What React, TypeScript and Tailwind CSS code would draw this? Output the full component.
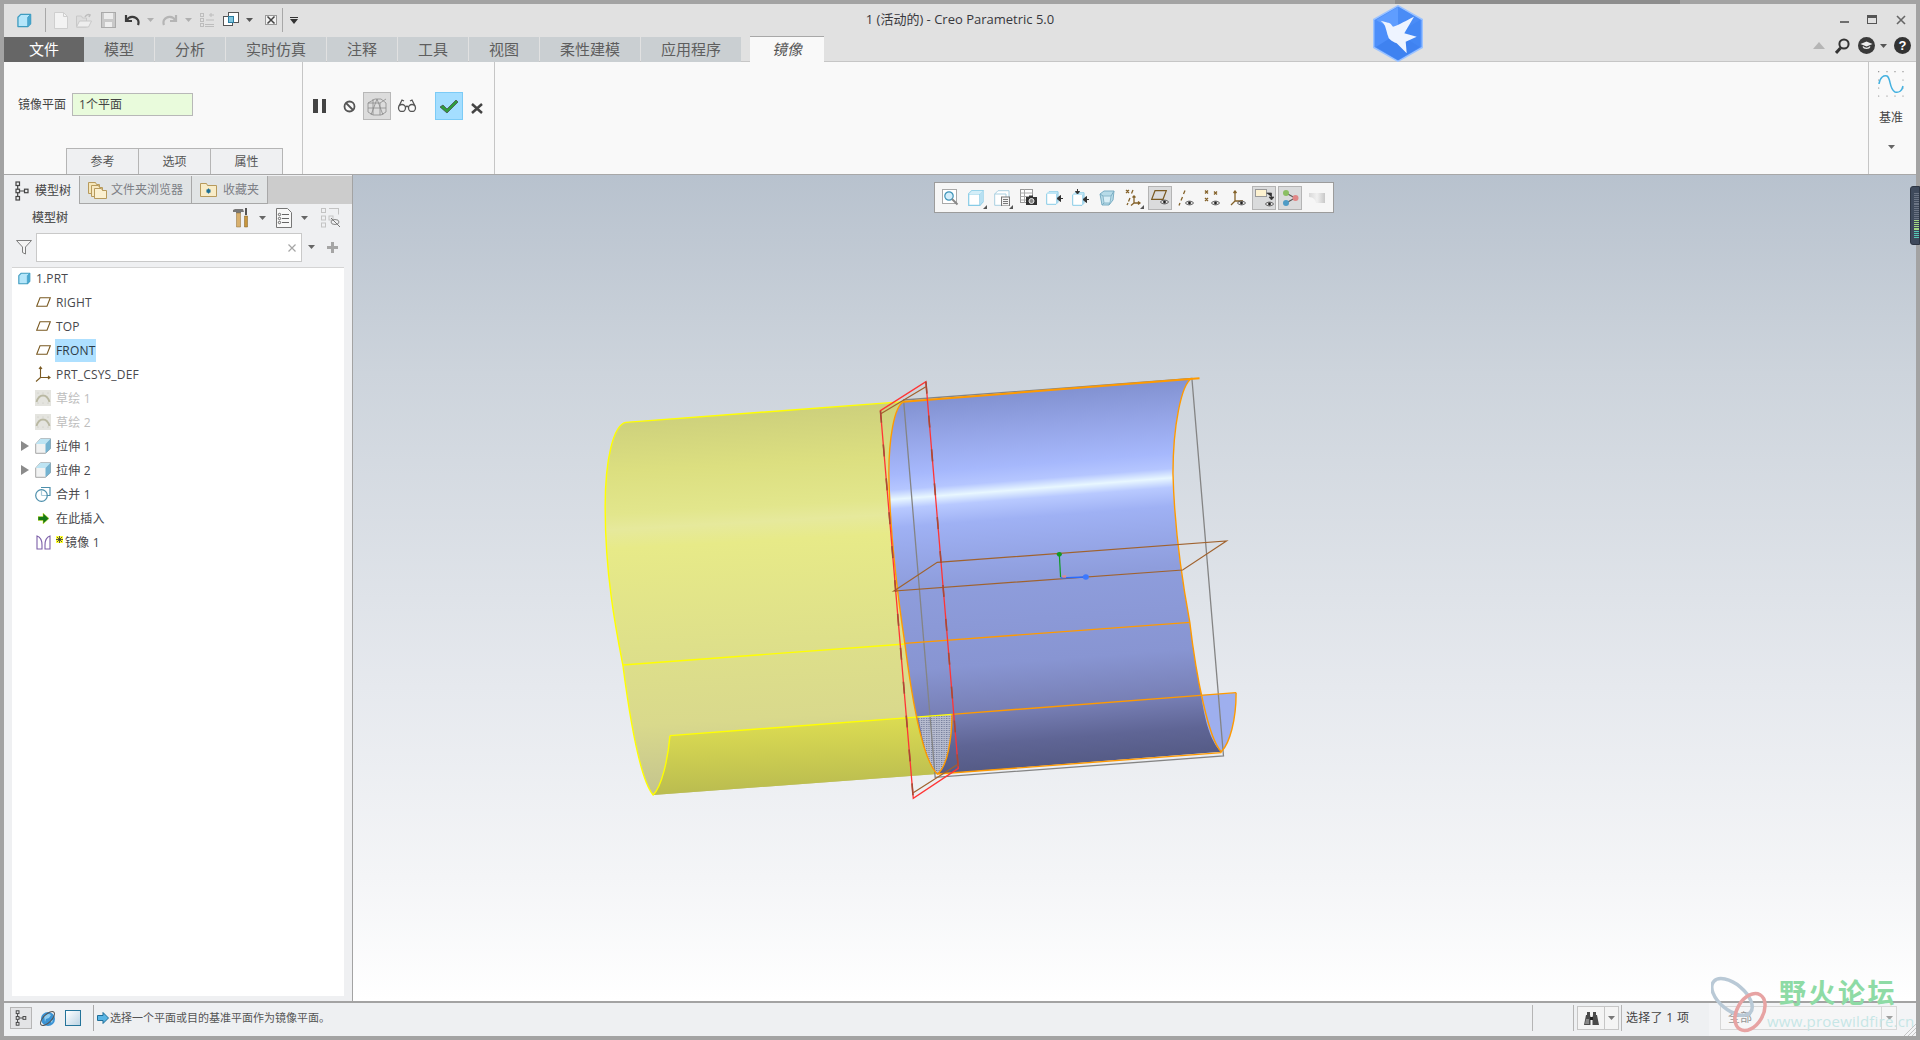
import React from "react";

const Caret = ({ c = "#666", w = 7, h = 4 }: { c?: string; w?: number; h?: number }) => (
  <svg width={w} height={h} viewBox="0 0 7 4" className="shrink-0"><path d="M0 0h7L3.5 4z" fill={c} /></svg>
);

const Cube = ({ s = 16 }: { s?: number }) => (
  <svg width={s} height={s} viewBox="0 0 16 16" className="shrink-0">
    <path d="M1 4.5 4 1.5h10.5v10L11.5 14.5H1z" fill="#b5e6fa" stroke="#3f9cc0" strokeWidth="1.4" strokeLinejoin="round" />
    <path d="M11.5 14.5V4.5L14.5 1.5" fill="none" stroke="#3f9cc0" />
    <path d="M11.5 4.5v10l3-3v-10z" fill="#4aa7cf" />
  </svg>
);

const TreeIcon = ({ s = 14, h = 20 }: { s?: number; h?: number }) => (
  <svg width={s} height={h} viewBox="0 0 14 20" className="shrink-0" fill="none" stroke="#444" strokeWidth="1.2">
    <rect x="1" y="1" width="3.5" height="3.5" /><rect x="1" y="8.2" width="3.5" height="3.5" /><rect x="1" y="15.5" width="3.5" height="3.5" />
    <rect x="9.5" y="8.2" width="3.5" height="3.5" /><path d="M2.7 4.5v3.7M2.7 11.7v3.8M4.5 10h5" />
  </svg>
);

const PlaneIcon = ({ c = "#7a5a22" }: { c?: string }) => (
  <svg width="15" height="10" viewBox="0 0 15 10" className="shrink-0"><path d="M4 .7h10.3L11 9.3H.7z" fill="none" stroke={c} strokeWidth="1.1" /></svg>
);

const Eye = () => (
  <svg width="9" height="6" viewBox="0 0 11 7" className="absolute bottom-0 right-0">
    <path d="M.5 3.5C3 .5 8 .5 10.5 3.5 8 6.5 3 6.5.5 3.5z" fill="#e5e5e5" stroke="#333" /><circle cx="5.5" cy="3.5" r="1.7" fill="#222" />
  </svg>
);

const SketchIcon = () => (
  <svg width="16" height="16" viewBox="0 0 16 16" className="shrink-0">
    <rect width="16" height="16" fill="#e4e4df" />
    <g fill="#bcbcb4"><circle cx="3" cy="3" r=".5" /><circle cx="8" cy="3" r=".5" /><circle cx="13" cy="3" r=".5" /><circle cx="3" cy="13" r=".5" /><circle cx="8" cy="13" r=".5" /><circle cx="13" cy="13" r=".5" /></g>
    <path d="M1.5 12C3 7 6 5.5 8 5.5s5 1.5 6.500 6.500" fill="none" stroke="#b9b8a2" strokeWidth="1.800" />
  </svg>
);

const ExtrudeIcon = () => (
  <svg width="16" height="16" viewBox="0 0 16 16" className="shrink-0">
    <path d="M.7 6 5.500.7h10v10L10.500 15.300H.7z" fill="#f1f2f2" stroke="#a5a5a5" />
    <path d="M.7 6 5.500.7h10L10.500 6z" fill="#bde4f3" />
    <path d="M10.500 6 15.500.7v10l-5 4.600z" fill="#74b3d1" />
  </svg>
);

const TreeRow = ({ icon, label, arrow, hi, dim, indent = true, star }: { icon: React.ReactNode; label: string; arrow?: boolean; hi?: boolean; dim?: boolean; indent?: boolean; star?: boolean }) => (
  <div className={`h-[24px] flex items-center ${indent ? "pl-[9px]" : "pl-[4px]"}`}>
    {indent && (
      <div className="w-[8px] mr-[6px] flex justify-center">
        {arrow && <svg width="8" height="10" viewBox="0 0 8 10"><path d="M0 0l8 5-8 5z" fill="#8b8b8b" /></svg>}
      </div>
    )}
    <div className="w-[16px] flex justify-center">{icon}</div>
    <div className={`${indent ? "ml-[5px]" : "ml-[4px]"} flex items-center`}>
      {star && (
        <svg width="7" height="7" viewBox="0 0 7 7" className="mr-[2px] -mt-[5px] shrink-0">
          <rect width="7" height="7" fill="#ffff33" /><path d="M3.500 0v7M0 3.500h7M1 1l5 5M6 1 1 6" stroke="#333" strokeWidth=".8" />
        </svg>
      )}
      <span className={`text-[12px] leading-[23px] h-[23px] tracking-[0.18px] ${hi ? "bg-[#aee0ff] px-[1px] -mx-[1px] text-[#2d3b46]" : dim ? "text-[#bdbdbd]" : "text-[#48484c]"}`}>{label}</span>
    </div>
  </div>
);

const TB = ({ active, children, mark }: { active?: boolean; children: React.ReactNode; mark?: boolean }) => (
  <div className={`relative w-[24px] h-[24px] shrink-0 flex items-center justify-center ${active ? "bg-[#dadbdc] border border-[#b4b4b4]" : ""}`}>
    {children}
    {mark && <svg width="4" height="4" viewBox="0 0 4 4" className="absolute right-[1px] bottom-[1px]"><path d="M4 0v4H0z" fill="#555" /></svg>}
  </div>
);

const BlueBox = () => (
  <svg width="16" height="16" viewBox="0 0 16 16">
    <path d="M.7 4 4 .7h11v11L11.800 15.300H.7z" fill="#fff" stroke="#86cbe6" strokeWidth="1.200" /><path d="M.7 4H11.800V15.300M11.800 4 15 .7" fill="none" stroke="#86cbe6" /><path d="M.7 4 4 .7h11L11.800 4z" fill="#d4eef8" /><path d="M11.800 4 15 .7v11l-3.200 3.600z" fill="#b7e0f2" />
  </svg>
);

const ViewToolbar = () => (
  <div className="absolute left-[581px] top-[7px] h-[31px] w-[400px] bg-[#f6f6f6] border border-[#9c9c9c] flex items-center pl-[3px] gap-[2.2px]">
    <TB>
      <svg width="17" height="17" viewBox="0 0 17 17"><rect x=".5" y=".5" width="14" height="14" fill="#fff" stroke="#a9a9a9" /><circle cx="7" cy="7" r="4.200" fill="#d4eefb" stroke="#3d93b8" strokeWidth="1.200" /><path d="M10 10l5.500 5.500" stroke="#888" strokeWidth="2" /></svg>
    </TB>
    <TB mark><BlueBox /></TB>
    <TB mark>
      <svg width="16" height="16" viewBox="0 0 16 16"><path d="M.7 4 4 .7h11v14.600H.7z" fill="#fff" stroke="#a9cfe0" /><path d="M.7 4H12V15" fill="none" stroke="#a9cfe0" /><rect x="7.500" y="7" width="8" height="9" fill="#f4f4f4" stroke="#777" /><path d="M9 9.500h5M9 11.500h5M9 13.500h5" stroke="#777" /></svg>
    </TB>
    <TB>
      <svg width="17" height="17" viewBox="0 0 17 17"><rect x=".5" y=".5" width="12" height="13" fill="#fff" stroke="#999" /><path d="M.5 4h12M.5 7.500h12M.5 11h12M4.500.5v13" stroke="#aaa" /><rect x="6" y="8" width="11" height="8" fill="#333" /><circle cx="11.500" cy="12" r="2.500" fill="#888" stroke="#eee" /><rect x="9" y="6.500" width="4" height="2" fill="#333" /></svg>
    </TB>
    <TB>
      <svg width="17" height="14" viewBox="0 0 17 14"><path d="M.7 3 3 .7h9v10.500L10 13.300H.7z" fill="#fff" stroke="#86cbe6" /><path d="M.7 3 3 .7h9L10 3z" fill="#bfe6f6" /><path d="M10 3 12 .7v10.500l-2 2.100z" fill="#a8d8ee" /><path d="M17 7.500h-3.500M11 7.500l3.500-3v6z" fill="#333" stroke="#333" /></svg>
    </TB>
    <TB>
      <svg width="17" height="17" viewBox="0 0 17 17"><path d="M.7 6 3 3.700h9v10.500L10 16.300H.7z" fill="#fff" stroke="#86cbe6" /><path d="M.7 6 3 3.700h9L10 6z" fill="#bfe6f6" /><path d="M10 6 12 3.700v10.500l-2 2.100z" fill="#a8d8ee" /><path d="M17 10.500h-3.500M11 10.500l3.500-3v6zM5.500 0v3M3.500 2.500h4L5.500 5z" fill="#333" stroke="#333" /></svg>
    </TB>
    <TB>
      <svg width="16" height="16" viewBox="0 0 16 16"><path d="M1 4 5 1h10l-1 9-4 5H3z" fill="#b7dbe8" stroke="#7aaec4" /><path d="M4 6h8l-1 7H5z" fill="#d8eef6" stroke="#8ab8cb" /><path d="M1 4l3 2M15 1l-3 5M10 15l1-2M3 15l2-2" stroke="#7aaec4" /></svg>
    </TB>
    <TB mark>
      <svg width="17" height="17" viewBox="0 0 17 17" stroke="#84622a" strokeWidth="1.300" fill="none"><path d="M1 1l3 3M4 1 1 4M8 1 6.500 4.500M5 9 3.500 12.500M2 16l1-2M9 7v7h6M9 14l-3 2.500M13 12.500l2 1.500-2 1.500M7.500 8.500 9 7l1.500 1.500" /></svg>
    </TB>
    <TB active>
      <div className="relative w-[18px] h-[15px]">
        <svg width="16" height="10" viewBox="0 0 16 10" className="absolute left-0 top-0"><path d="M4 .7h11.300L12 9.300H.7z" fill="none" stroke="#7a5a22" strokeWidth="1.200" /></svg>
        <Eye />
      </div>
    </TB>
    <TB>
      <div className="relative w-[16px] h-[16px]">
        <svg width="8" height="16" viewBox="0 0 8 16" stroke="#84622a" strokeWidth="1.300" fill="none" className="absolute left-0 top-0"><path d="M7 .5 5.500 4M4.500 7 3 10.500M2 13 1 15.500" /></svg>
        <Eye />
      </div>
    </TB>
    <TB>
      <div className="relative w-[16px] h-[16px]">
        <svg width="16" height="14" viewBox="0 0 16 14" stroke="#84622a" strokeWidth="1.300" fill="none" className="absolute left-0 top-0"><path d="M1 .5l3 3M4 .5l-3 3M10 1.500l3 3M13 1.500l-3 3M1 8l3 3M4 8l-3 3" /></svg>
        <Eye />
      </div>
    </TB>
    <TB>
      <div className="relative w-[16px] h-[16px]">
        <svg width="14" height="16" viewBox="0 0 14 16" stroke="#84622a" strokeWidth="1.300" fill="none" className="absolute left-0 top-0"><path d="M5 1v10h8M5 11l-4 4M3.500 3 5 1l1.500 2" /></svg>
        <Eye />
      </div>
    </TB>
    <TB active>
      <div className="relative w-[19px] h-[18px]">
        <svg width="19" height="12" viewBox="0 0 19 12" className="absolute left-0 top-0"><rect x=".5" y=".5" width="11" height="7" fill="#fdf2d0" stroke="#999" /><path d="M11.500 4h5v4M14 8h5l-2.500 3z" fill="#333" stroke="#333" strokeWidth=".7" /></svg>
        <Eye />
      </div>
    </TB>
    <TB active>
      <svg width="17" height="18" viewBox="0 0 17 18"><path d="M4 4l9 5M4 14l9-5" stroke="#555" strokeWidth="1.200" /><circle cx="4" cy="4" r="3" fill="#8bbf63" /><circle cx="4" cy="14" r="3" fill="#4f9cc6" /><circle cx="13.500" cy="9" r="3" fill="#e08686" /></svg>
    </TB>
    <TB>
      <svg width="16" height="12" viewBox="0 0 16 12"><defs><linearGradient id="btg" x1="0" x2="1" y1="0" y2="0"><stop offset="0" stopColor="#d8d8d8" /><stop offset=".5" stopColor="#f0f0f0" /><stop offset="1" stopColor="#c8c8c8" /></linearGradient></defs><path d="M0 1h16v10H7c0-3-3-6-7-6z" fill="url(#btg)" /></svg>
    </TB>
  </div>
);

const Scene = () => {
  const ns = { vectorEffect: "non-scaling-stroke" as const, fill: "none" };
  return (
    <svg className="absolute left-[237px] top-[185px]" width="660" height="450" viewBox="0 0 1568 1350" preserveAspectRatio="none">
      <defs>
        <linearGradient id="yel" gradientUnits="userSpaceOnUse" x1="400" y1="150" x2="480" y2="1300">
          <stop offset="0" stopColor="#cdd07c" />
          <stop offset=".14" stopColor="#dcdf80" />
          <stop offset=".25" stopColor="#e2e68c" />
          <stop offset=".29" stopColor="#e6e99c" />
          <stop offset=".34" stopColor="#e7ea88" />
          <stop offset=".6" stopColor="#dee08a" />
          <stop offset=".8" stopColor="#d9d98c" />
          <stop offset="1" stopColor="#c2c28e" />
        </linearGradient>
        <linearGradient id="yel2" gradientUnits="userSpaceOnUse" x1="500" y1="1080" x2="510" y2="1290">
          <stop offset="0" stopColor="#dcdc52" />
          <stop offset="1" stopColor="#babc50" />
        </linearGradient>
        <linearGradient id="blu" gradientUnits="userSpaceOnUse" x1="1050" y1="85" x2="1160" y2="1210">
          <stop offset="0" stopColor="#8090cf" />
          <stop offset=".1" stopColor="#94a4e6" />
          <stop offset=".2" stopColor="#a6b8fc" />
          <stop offset=".24" stopColor="#b5c6ff" />
          <stop offset=".265" stopColor="#e8f7ff" />
          <stop offset=".29" stopColor="#b8c9ff" />
          <stop offset=".34" stopColor="#9fb1f4" />
          <stop offset=".5" stopColor="#8e9ddc" />
          <stop offset=".72" stopColor="#8895d2" />
          <stop offset=".84" stopColor="#7880b6" />
          <stop offset=".93" stopColor="#5f6595" />
          <stop offset="1" stopColor="#555b86" />
        </linearGradient>
        <pattern id="dots" width="6" height="6" patternUnits="userSpaceOnUse">
          <rect width="6" height="6" fill="#b7bccf" /><rect width="3" height="3" fill="#777f9c" />
        </pattern>
      </defs>
      <path d="M85 187L745 125C722 140 710 240 710 340C712 500 730 700 748 850C765 1020 790 1200 825 1242L150 1305C120 1260 95 1080 78 915C60 800 36 640 36 440C36 300 55 195 85 187Z" fill="url(#yel)" />
      <path d="M190 1127L860 1063L825 1242L150 1305C170 1280 185 1200 190 1127Z" fill="url(#yel2)" />
      <path d="M745 125L1430 55C1405 70 1385 200 1385 340C1388 500 1405 650 1425 787C1440 950 1470 1140 1500 1175L825 1242C790 1200 765 1020 748 850C730 700 712 500 710 340C710 240 722 140 745 125Z" fill="url(#blu)" />
      <path d="M1452 1005L1535 998C1535 1080 1520 1150 1500 1175C1475 1150 1460 1080 1452 1005Z" fill="#9eafee" />
      <path d="M780 1070L860 1063C860 1130 850 1220 825 1242C800 1220 790 1130 780 1070Z" fill="url(#dots)" />

      <path d="M745 120L1430 55L1505 1188L820 1252Z" stroke="#848484" strokeWidth="1.300" {...ns} />

      <g stroke="#ffff00" strokeWidth="1.400">
        <path d="M85 187L745 125" {...ns} />
        <path d="M78 915L748 852" {...ns} />
        <path d="M190 1127L860 1063" {...ns} />
        <path d="M85 187C55 195 36 300 36 440C36 640 60 800 78 915C95 1080 120 1260 150 1305C170 1280 185 1200 190 1127" {...ns} />
      </g>
      <g stroke="#ff9a00" strokeWidth="1.400">
        <path d="M745 125L1448 55" strokeWidth="2" {...ns} />
        <path d="M748 850L1425 787" {...ns} />
        <path d="M860 1063L1535 998" {...ns} />
        <path d="M825 1242L1500 1178" {...ns} />
        <path d="M745 125C722 140 710 240 710 340C712 500 730 700 748 850C765 1020 790 1200 825 1242C850 1220 860 1130 860 1063" {...ns} />
        <path d="M1430 55C1405 70 1385 200 1385 340C1388 500 1405 650 1425 787C1440 950 1470 1140 1500 1175C1520 1150 1535 1080 1535 998" {...ns} />
      </g>
      <g stroke="#a0622e" strokeWidth="1.200">
        <path d="M722 693L825 607L1512 543L1408 630Z" {...ns} />
        <path d="M690 162L798 80M768 1298L875 1212" {...ns} />
      </g>
      <path d="M1118 652L1115 583" stroke="#0f9a20" strokeWidth="1.200" {...ns} />
      <ellipse cx="1115" cy="583" rx="6" ry="7" fill="#0f9a20" />
      <path d="M1118 654L1178 651" stroke="#2a6bff" strokeWidth="1.400" {...ns} />
      <ellipse cx="1178" cy="651" rx="7" ry="8" fill="#3b78ff" />
      <rect x="1122" y="646" width="9" height="7" fill="#e08a8a" />
      <path d="M690 152L798 65L875 1225L768 1315Z" stroke="#ff3535" strokeWidth="1.300" {...ns} />
      <path d="M690 152L768 1315M798 65L875 1225" stroke="#a84a35" strokeWidth="1.600" strokeDasharray="12 22" {...ns} />
    </svg>
  );
};

const Tab = ({ label, w, first }: { label: string; w: number; first?: boolean }) => (
  <div style={{ width: w }} className={`h-[25px] mt-[1px] flex items-center justify-center text-[15px] ${first ? "bg-[#666666] text-white" : "bg-[#cacfd2] text-[#5e5e5e] mr-[1px]"}`}>{label}</div>
);

export default function App() {
  return (
    <div className="relative w-[1920px] h-[1040px] overflow-hidden bg-[#a3a3a3] px-[4px] pt-[4px] pb-[4px] flex flex-col font-['Open_Sans','Noto_Sans_CJK_SC',sans-serif] text-[12px] text-[#444]">
      {/* title bar */}
      <div className="h-[32px] shrink-0 bg-[#e1e1e1] grid grid-cols-[1fr_auto_1fr] items-center">
        <div className="flex items-center pl-[13px]">
          <Cube s={15} />
          <div className="w-px h-[24px] bg-[#a8a8a8] ml-[13px]" />
          <svg width="14" height="17" viewBox="0 0 14 17" className="ml-[8px]"><path d="M.5.5h9l4 4v12H.5z" fill="#f3f3f3" stroke="#cfcfcf" /><path d="M9.500.5v4h4" fill="none" stroke="#cfcfcf" /></svg>
          <svg width="16" height="15" viewBox="0 0 16 15" className="ml-[8px]"><path d="M.5 14V3h5l1 2h4v9z" fill="#ddd" stroke="#c8c8c8" /><path d="M.5 14l3-6h12l-3 6z" fill="#eee" stroke="#c8c8c8" /><path d="M9 4c1-2 3-3 5-2l-1 2" fill="none" stroke="#bdbdbd" strokeWidth="1.500" /></svg>
          <svg width="15" height="16" viewBox="0 0 15 16" className="ml-[9px]"><rect x=".5" y=".5" width="14" height="15" fill="#c9c9c9" stroke="#aaa" /><rect x="3" y="1" width="9" height="6" fill="#ececec" /><rect x="4" y="10" width="7" height="5" fill="#eee" /></svg>
          <svg width="16" height="13" viewBox="0 0 16 13" className="ml-[8px]"><path d="M2 1v6h6M2.500 6.500C5 2 11 1.500 14 6c.7 1.500.8 3 0 5" fill="none" stroke="#3c3c3c" strokeWidth="2.200" /></svg>
          <div className="ml-[7px]"><Caret c="#b0b0b0" /></div>
          <svg width="16" height="13" viewBox="0 0 16 13" className="ml-[8px]"><path d="M14 1v6H8M13.500 6.500C11 2 5 1.500 2 6c-.7 1.500-.8 3 0 5" fill="none" stroke="#b5b5b5" strokeWidth="2.200" /></svg>
          <div className="ml-[7px]"><Caret c="#b0b0b0" /></div>
          <svg width="15" height="16" viewBox="0 0 15 16" className="ml-[8px]" stroke="#bdbdbd" fill="none"><rect x=".5" y="1.500" width="3" height="3" /><rect x=".5" y="6.500" width="3" height="3" /><rect x=".5" y="11.500" width="3" height="3" /><path d="M5 12.500h9M5 14.500h9M6 8h8M9 3h5M11 1v4" /></svg>
          <svg width="16" height="16" viewBox="0 0 16 16" className="ml-[8px]"><rect x=".5" y="4.500" width="9" height="9" fill="#fff" stroke="#555" /><rect x="5.500" y=".5" width="10" height="10" fill="#fff" stroke="#555" /><rect x="5.500" y="4.500" width="5" height="6" fill="#7fc5de" stroke="#2b7c9f" /></svg>
          <div className="ml-[7px]"><Caret c="#555" /></div>
          <svg width="12" height="10" viewBox="0 0 12 10" className="ml-[12px]"><rect x=".5" y=".5" width="11" height="9" fill="#f2f2f2" stroke="#999" /><path d="M2.500 1.500l7 7M9.500 1.500l-7 7" stroke="#444" strokeWidth="1.500" /></svg>
          <div className="w-px h-[24px] bg-[#a8a8a8] ml-[5px]" />
          <svg width="8" height="7" viewBox="0 0 8 7" className="ml-[7px]"><path d="M0 0h8v1H0zM0 2h8L4 7z" fill="#333" /></svg>
        </div>
        <div className="text-[13px] text-[#38383d]">1 (活动的) - Creo Parametric 5.0</div>
        <div className="flex items-center justify-end pr-[10px] gap-[18px] -mt-[1px]">
          <div className="w-[9px] h-[2px] bg-[#6e6e6e] mt-[4px]" />
          <div className="w-[10px] h-[9px] border border-[#555] border-t-[3px]" />
          <svg width="10" height="10" viewBox="0 0 10 10" className="ml-[1px]"><path d="M1 1l8 8M9 1 1 9" stroke="#666" strokeWidth="1.600" /></svg>
        </div>
      </div>
      {/* tabs row */}
      <div className="h-[26px] shrink-0 bg-[#e1e1e1] flex items-stretch relative border-b border-[#c6c6c6]">
        <Tab label="文件" w={80} first />
        <Tab label="模型" w={70} />
        <Tab label="分析" w={70} />
        <Tab label="实时仿真" w={100} />
        <Tab label="注释" w={70} />
        <Tab label="工具" w={70} />
        <Tab label="视图" w={70} />
        <Tab label="柔性建模" w={100} />
        <Tab label="应用程序" w={100} />
        <div className="ml-[8px] w-[74px] h-[26px] bg-[#f9f9f9] border-t border-[#a8a8a8] flex items-center justify-center text-[15px] italic text-[#555] relative z-10">镜像</div>
        <div className="ml-auto flex items-center pr-[5px] pb-[6px]">
          <svg width="12" height="7" viewBox="0 0 12 7"><path d="M0 7 6 0l6 7z" fill="#b5b5b5" /></svg>
          <svg width="15" height="16" viewBox="0 0 15 16" className="ml-[10px]"><circle cx="9" cy="6" r="4.600" fill="none" stroke="#333" strokeWidth="2" /><path d="M5.500 10 1 15" stroke="#333" strokeWidth="3" /></svg>
          <svg width="17" height="17" viewBox="0 0 17 17" className="ml-[8px]"><circle cx="8.500" cy="8.500" r="8.500" fill="#3a3a3a" /><path d="M2.500 7 8.500 4.500l6 2.500-6 2.500z" fill="#eee" /><path d="M5 9.500c1 2.500 6 2.500 7 0" fill="none" stroke="#eee" strokeWidth="1.300" /></svg>
          <div className="ml-[5px]"><Caret c="#555" /></div>
          <div className="ml-[7px] w-[17px] h-[17px] rounded-full bg-[#333] text-white flex items-center justify-center text-[13px] font-bold font-['Liberation_Sans',sans-serif]">?</div>
        </div>
      </div>
      {/* ribbon */}
      <div className="h-[112px] shrink-0 bg-[#f9f9f9] flex">
        <div className="w-[299px] h-full border-r border-[#c6c6c6] relative flex flex-col">
          <div className="flex items-center pl-[14px] pt-[31px]">
            <span className="text-[12px] text-[#444]">镜像平面</span>
            <div className="ml-[6px] w-[121px] h-[23px] bg-[#e9fbdc] border border-[#b8b8b8] flex items-center pl-[6px] text-[12px] text-[#444]">1个平面</div>
          </div>
          <div className="mt-auto ml-[62px] flex">
            {["参考", "选项", "属性"].map((t) => (
              <div key={t} className="w-[73px] h-[26px] -mr-px bg-[#eff0f2] border border-b-0 border-[#b5b5b5] flex items-center justify-center text-[12px] text-[#555]">{t}</div>
            ))}
          </div>
        </div>
        <div className="w-[192px] h-full border-r border-[#c6c6c6] flex items-start pt-[30px]">
          <div className="ml-[10px] mt-[7px] flex gap-[4px]"><div className="w-[4.500px] h-[14px] bg-[#444]" /><div className="w-[4.500px] h-[14px] bg-[#444]" /></div>
          <svg width="13" height="13" viewBox="0 0 13 13" className="ml-[17px] mt-[8px]"><circle cx="6.500" cy="6.500" r="5" fill="none" stroke="#555" strokeWidth="1.800" /><path d="M3 3l7 7" stroke="#555" strokeWidth="1.800" /></svg>
          <div className="ml-[7px] w-[28px] h-[28px] bg-[#dcdcdc] border border-[#b8b8b8] flex items-center justify-center">
            <svg width="20" height="19" viewBox="0 0 20 19" fill="none" stroke="#8a8a8a" strokeWidth=".8"><path d="M1 6l7-4h6l5 4v9l-5 3H6l-5-3zM1 6h12l6-4M13 6v12M6 2v16M10 2 4 18M10 2l6 16M1 11h18" /></svg>
          </div>
          <svg width="20" height="13" viewBox="0 0 20 13" className="ml-[6px] mt-[7px]" fill="none" stroke="#555" strokeWidth="1.300"><circle cx="5" cy="9" r="3.500" /><circle cx="15" cy="9" r="3.500" /><path d="M8.500 8c1-1 2-1 3 0M2 7l3-6 2 1M18 7l-3-6-2 1" /></svg>
          <div className="ml-[18px] w-[28px] h-[28px] bg-[#a4deff] border border-[#7ccbf6] flex items-center justify-center">
            <svg width="20" height="15" viewBox="0 0 20 15"><path d="M1 8l3-2 4 4L17 1l2 2L8 14z" fill="#2f9d3c" stroke="#454545" strokeWidth=".7" /></svg>
          </div>
          <svg width="12" height="11" viewBox="0 0 12 11" className="ml-[8px] mt-[11px]"><path d="M1 1l10 9M11 1 1 10" stroke="#444" strokeWidth="2.500" /></svg>
        </div>
        <div className="flex-1" />
        <div className="w-[48px] h-full border-l border-[#c6c6c6] flex flex-col items-center pt-[9px] pr-[3px]">
          <svg width="26" height="26" viewBox="0 0 26 26">
            <g fill="#777"><circle cx=".7" cy=".7" r=".6" /><circle cx="9" cy=".7" r=".6" /><circle cx="17" cy=".7" r=".6" /><circle cx="25" cy=".7" r=".6" /><circle cx=".7" cy="9" r=".6" /><circle cx="25" cy="9" r=".6" /><circle cx=".7" cy="17" r=".6" /><circle cx="25" cy="17" r=".6" /><circle cx=".7" cy="25" r=".6" /><circle cx="9" cy="25" r=".6" /><circle cx="17" cy="25" r=".6" /><circle cx="25" cy="25" r=".6" /></g>
            <path d="M1 13C2 6 6 4 9 5c4 2 2 13 8 16 4 1 7-1 8-6" fill="none" stroke="#43b1e0" strokeWidth="1.500" />
          </svg>
          <span className="mt-[13px] text-[12px] text-[#444] leading-[16px]">基准</span>
          <div className="mt-[19px]"><Caret c="#666" /></div>
        </div>
      </div>
      {/* main */}
      <div className="flex-1 min-h-0 flex border-t border-[#a8a8a8]">
        <div className="w-[349px] shrink-0 h-full bg-[#eff0f2] border-r-[1px] border-[#a3a3a3] pt-[1px] flex flex-col">
          <div className="h-[28px] shrink-0 bg-[#cccccc] flex items-stretch">
            <div className="w-[76px] border-r border-[#a8a8a8] bg-[#eff0f2] flex items-center pl-[11px] pt-[1px]">
              <TreeIcon />
              <span className="ml-[6px] text-[12px] text-[#444]">模型树</span>
            </div>
            <div className="w-[112px] border-r border-b border-[#a8a8a8] bg-[#e1e4e5] flex items-center pl-[8px]">
              <svg width="19" height="19" viewBox="0 0 19 19"><path d="M.5 2.500h7l1 2h3v9H.5z" fill="#f5e6b8" stroke="#b79a5c" /><path d="M3.500 5.500h7l1 2h3v9h-11z" fill="#f7e8c0" stroke="#b79a5c" /><path d="M6.500 8.500h7l1 2h4v8h-12z" fill="#fbf0d0" stroke="#b79a5c" /></svg>
              <span className="ml-[4px] text-[12px] text-[#7d7f85]">文件夹浏览器</span>
            </div>
            <div className="w-[76px] border-r border-b border-[#a8a8a8] bg-[#e1e4e5] flex items-center pl-[8px]">
              <svg width="17" height="15" viewBox="0 0 17 15"><path d="M.5 1.500h6l1 2h9v11H.5z" fill="#f8ecc8" stroke="#b79a5c" /><path d="M6 9h5M8.500 6.500v5M6.800 7.300l3.400 3.400M10.200 7.300l-3.400 3.400" stroke="#1b6e93" strokeWidth="1.100" /></svg>
              <span className="ml-[6px] text-[12px] text-[#7d7f85]">收藏夹</span>
            </div>
          </div>
          <div className="h-[28px] shrink-0 flex items-center">
            <span className="ml-[28px] text-[12px] font-medium text-[#555]">模型树</span>
            <svg width="16" height="20" viewBox="0 0 16 20" className="ml-[165px]"><path d="M0 2l2-1h8l1 3H8v1H3V4L0 4z" fill="#777" /><path d="M3.500 5h4v14h-4z" fill="#d8b06e" stroke="#8c6c36" strokeWidth=".5" /><path d="M13 0v7" stroke="#555" strokeWidth="2" /><path d="M11.500 8h3v11h-3z" fill="#c8963e" stroke="#7c5c24" strokeWidth=".5" /></svg>
            <div className="ml-[10px]"><Caret c="#666" /></div>
            <svg width="16" height="20" viewBox="0 0 16 20" className="ml-[10px]"><path d="M.5.5h11l4 4v15H.5z" fill="#f8f8f8" stroke="#777" /><path d="M6 6.500h7M6 10.500h7M6 14.500h7" stroke="#666" /><circle cx="3.500" cy="6.500" r="1.200" fill="none" stroke="#666" /><circle cx="3.500" cy="10.500" r="1.200" fill="none" stroke="#666" /><circle cx="3.500" cy="14.500" r="1.200" fill="none" stroke="#666" /></svg>
            <div className="ml-[9px]"><Caret c="#666" /></div>
            <svg width="20" height="20" viewBox="0 0 20 20" className="ml-[13px]" fill="none" stroke="#c3c3c3"><rect x=".5" y=".5" width="4" height="4" /><rect x=".5" y="8" width="4" height="4" /><rect x=".5" y="15" width="4" height="4" /><rect x="8" y="8" width="4" height="4" /><path d="M8 .5h10M17.500 .5v6" /><ellipse cx="14" cy="14" rx="4" ry="2.500" stroke="#888" /><path d="M10 10l9 9" stroke="#777" /></svg>
          </div>
          <div className="h-[30px] shrink-0 flex items-end">
            <svg width="16" height="15" viewBox="0 0 16 15" className="ml-[12px] mb-[7px]"><path d="M.5.5h15L9.500 7v7l-3-1.500V7z" fill="#f4f4f4" stroke="#7e7e7e" /></svg>
            <div className="ml-[4px] w-[266px] h-[29px] bg-white border border-[#c9c9c9] flex items-center justify-end pr-[5px]">
              <svg width="8" height="8" viewBox="0 0 8 8"><path d="M.5.500l7 7M7.500.5l-7 7" stroke="#a5a5a5" strokeWidth="1.200" /></svg>
            </div>
            <div className="ml-[6px] mb-[13px]"><Caret c="#666" /></div>
            <svg width="11" height="11" viewBox="0 0 11 11" className="ml-[12px] mb-[9px]"><path d="M4 0h3v4h4v3H7v4H4V7H0V4h4z" fill="#a5a5a5" /></svg>
          </div>
          <div className="flex-1 min-h-0 mt-[5px] mb-[5px] mx-[8px] bg-white border-t border-[#d4d4d4]">
            <div className="-mt-[2px]">
              <TreeRow indent={false} icon={<Cube s={13} />} label="1.PRT" />
              <TreeRow icon={<PlaneIcon />} label="RIGHT" />
              <TreeRow icon={<PlaneIcon />} label="TOP" />
              <TreeRow icon={<PlaneIcon />} label="FRONT" hi />
              <TreeRow icon={<svg width="16" height="16" viewBox="0 0 16 16" fill="none" stroke="#7a5a22" strokeWidth="1.100"><path d="M5.500 1v10.500H15M5.500 11.500 1 15.500M4 3l1.500-2L7 3M13 10l2 1.500L13 13" /></svg>} label="PRT_CSYS_DEF" />
              <TreeRow icon={<SketchIcon />} label="草绘 1" dim />
              <TreeRow icon={<SketchIcon />} label="草绘 2" dim />
              <TreeRow arrow icon={<ExtrudeIcon />} label="拉伸 1" />
              <TreeRow arrow icon={<ExtrudeIcon />} label="拉伸 2" />
              <TreeRow icon={<svg width="16" height="16" viewBox="0 0 16 16" fill="none" stroke="#4d8fac" strokeWidth="1.200"><path d="M6 1.500h9v8H10" /><circle cx="6.500" cy="9.500" r="5.800" /><path d="M6.500 9.500V4M6.500 9.500h5" stroke="#a8c9d8" /></svg>} label="合并 1" />
              <TreeRow icon={<svg width="11" height="11" viewBox="0 0 11 11"><path d="M0 3.500h5V0l6 5.500-6 5.500V7.500H0z" fill="#167a16" stroke="#d8e82a" strokeWidth=".5" /></svg>} label="在此插入" />
              <TreeRow star icon={<svg width="15" height="15" viewBox="0 0 15 15" fill="none" stroke="#7c5fa8" strokeWidth="1.100"><path d="M1 14V1c3 1 5 4 5 9v4zM14 14V1c-3 1-5 4-5 9v4z" /></svg>} label="镜像 1" />
            </div>
          </div>
        </div>
        <div className="flex-1 relative h-full bg-[linear-gradient(180deg,#b8c2ce_0%,#cdd4dc_24%,#e6e9ee_62%,#f4f5f7_85%,#ffffff_100%)]">
          <ViewToolbar />
          <Scene />
        </div>
      </div>
      {/* status */}
      <div className="h-[35px] shrink-0 border-t-2 border-[#a3a3a3] bg-[#eef0f2] flex items-center pb-[3px]">
        <div className="ml-[6px] w-[22px] h-[22px] bg-[#e3e4e6] border border-[#b6b6b6] flex items-center justify-center"><TreeIcon s={12} h={16} /></div>
        <svg width="17" height="17" viewBox="0 0 17 17" className="ml-[7px]"><circle cx="9" cy="9" r="7" fill="#3a93d4" /><path d="M5 6c2-2 5-3 7-1l-2 3-3 1-1 3zM11 11l3-1-1 3z" fill="#8ecdf0" /><ellipse cx="8.500" cy="8.500" rx="9" ry="4" transform="rotate(-45 8.500 8.500)" fill="none" stroke="#555" /></svg>
        <div className="ml-[9px] w-[16px] h-[16px] bg-[linear-gradient(135deg,#ffffff,#bcd4e4)] border border-[#24749a]" />
        <div className="ml-[12px] w-px h-[26px] bg-[#a8a8a8]" />
        <svg width="12" height="12" viewBox="0 0 12 12" className="ml-[3px]"><path d="M.5 3.500h5.500V.5L11.500 6 6 11.500V8.500H.5z" fill="#58b4e4" stroke="#1f6e98" /></svg>
        <span className="ml-[1px] text-[11px] text-[#555]">选择一个平面或目的基准平面作为镜像平面。</span>
        <div className="ml-auto w-px h-[26px] bg-[#b5b5b5]" />
        <div className="ml-[40px] w-px h-[26px] bg-[#b5b5b5]" />
        <div className="ml-[3px] w-[42px] h-[24px] bg-[#f4f4f4] border border-[#c6c6c6] flex items-center">
          <div className="w-[27px] h-full border-r border-[#c6c6c6] flex items-center justify-center">
            <svg width="17" height="15" viewBox="0 0 17 15"><path d="M1 14l2-10h1V1h3v3l.5 2v8zM16 14 14 4h-1V1h-3v3l-.5 2v8z" fill="#4a4a4a" /><path d="M7 6h3v3H7z" fill="#222" /><path d="M2 13h4V8H3z" fill="#888" /></svg>
          </div>
          <div className="flex-1 flex items-center justify-center"><Caret c="#777" /></div>
        </div>
        <div className="ml-[2px] w-px h-[26px] bg-[#b5b5b5]" />
        <span className="ml-[4px] text-[12px] text-[#444] tracking-[0.3px] w-[94px]">选择了 1 项</span>
        <div className="w-[177px] h-[24px] bg-[#f2f3f4] border border-[#c6c6c6] flex items-center text-[12px] text-[#666]">
          <span className="ml-[7px] flex-1">全部</span>
          <div className="w-[15px] h-full border-l border-[#c6c6c6] flex items-center justify-center"><Caret c="#777" /></div>
        </div>
        <div className="w-[19px]" />
      </div>

      {/* Thunder logo */}
      <svg width="50" height="57" viewBox="0 0 50 57" className="absolute left-[1373px] top-[5px]">
        <path d="M25 .7 49.300 14.500v28L25 56.300.7 42.500v-28z" fill="#4c8efa" stroke="#9cc3ff" strokeWidth="1.500" />
        <path d="M25 2 25 28 3 15z" fill="#5f9dff" />
        <path d="M25 2 47 15 25 28z" fill="#4a8cf6" />
        <path d="M47 15v27L25 28z" fill="#4387f4" />
        <path d="M25 28 47 42 25 55 3 42z" fill="#3f82f0" />
        <path d="M7.700 15.700 15 17.700c2-.5 3.500 2 5 4C26 20 34 15 41 11.700L31.300 28.300l12.400 3.400-11 5 1 11.600-10-10C18 36 15.500 33.500 15.300 31.700 14 29 13.500 25 12.700 23.300 12.300 21 11.500 19 7.700 15.700z" fill="#eef4ff" />
      </svg>
      <div className="absolute left-[1395px] top-0 w-[285px] h-[4px] bg-[#8d8d8d]" />

      {/* side gadget */}
      <div className="absolute left-[1910px] top-[186px] w-[10px] h-[59px] bg-[#3f4a5c] rounded-l-[3px] border border-[#2d3543] flex flex-col items-end justify-center gap-[1px] pl-[3px] py-[6px]">
        {Array.from({ length: 24 }).map((_, i) => (
          <div key={i} className={`h-px w-full ${i < 14 ? "bg-[#6b7484]" : i < 20 ? "bg-[#a3d982]" : "bg-[#55c9b5]"}`} />
        ))}
      </div>

      {/* watermark */}
      <div className="absolute left-[1709px] top-[1003px] w-[207px] h-[33px] bg-white/30" />
      <svg width="60" height="60" viewBox="0 0 60 60" className="absolute left-[1711px] top-[976px]" fill="none">
        <ellipse cx="21" cy="21" rx="24" ry="13" transform="rotate(40 21 21)" stroke="#b9c9d6" strokeWidth="3.500" />
        <ellipse cx="39" cy="36" rx="20" ry="13" transform="rotate(-60 39 36)" stroke="#e7a3a3" strokeWidth="3.500" />
      </svg>
      <div className="absolute left-[1779px] top-[975px] text-[27px] tracking-[2.500px] leading-[34px] font-bold text-[#8edba5] font-['Noto_Sans_CJK_SC',sans-serif] whitespace-nowrap">野火论坛</div>
      <div className="absolute left-[1767px] top-[1011px] text-[15px] leading-[20px] tracking-[0.2px] text-[#c6e6e6] font-['Open_Sans',sans-serif] whitespace-nowrap">www.proewildfire.cn</div>
      <svg width="12" height="12" viewBox="0 0 12 12" className="absolute left-[1904px] top-[1024px]" stroke="#c5c5c5" strokeWidth="1"><path d="M12 0 0 12M12 4 4 12M12 8l-4 4" /></svg>
    </div>
  );
}
